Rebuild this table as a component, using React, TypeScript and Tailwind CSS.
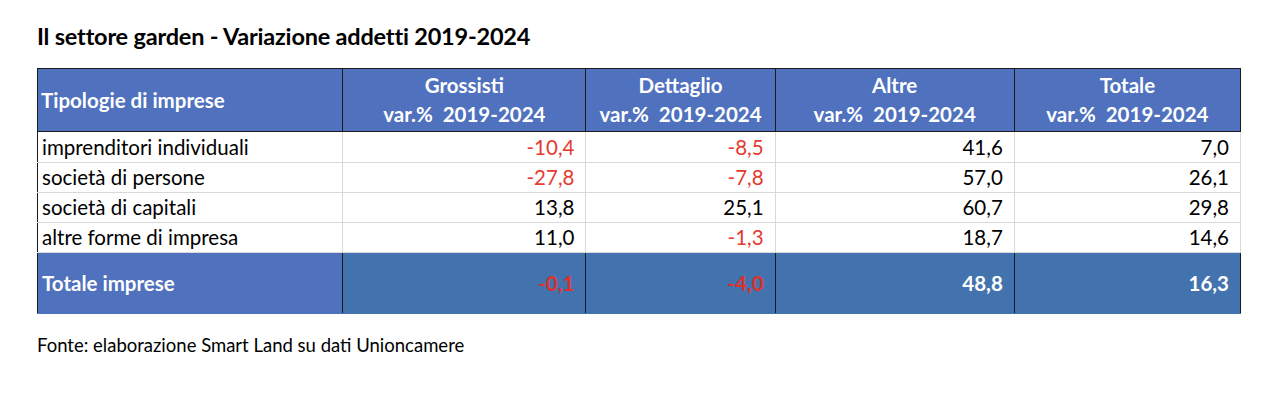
import React from "react";

type Row = {
  label: string;
  values: number[];
};

const rows: Row[] = [
  { label: "imprenditori individuali", values: [-10.4, -8.5, 41.6, 7.0] },
  { label: "società di persone", values: [-27.8, -7.8, 57.0, 26.1] },
  { label: "società di capitali", values: [13.8, 25.1, 60.7, 29.8] },
  { label: "altre forme di impresa", values: [11.0, -1.3, 18.7, 14.6] },
];

const total = [-0.1, -4.0, 48.8, 16.3];
const heads = ["Grossisti", "Dettaglio", "Altre", "Totale"];
const widths = ["w-[243px]", "w-[189px]", "w-[239px]", "w-[226px]"];
const rowHeights = ["h-[31px]", "h-[30px]", "h-[30px]", "h-[30px]"];

const fmt = (n: number) => n.toFixed(1).replace(".", ",");

export default function App() {
  return (
    <div className="h-[403px] w-[1280px] bg-white pl-[37px] pt-[22px] font-['Lato','Open_Sans',sans-serif] text-black">
      <h1 className="text-[23.5px] font-bold leading-7 tracking-[-0.2px]">
        Il settore garden - Variazione addetti 2019-2024
      </h1>

      <table className="mt-[18px] w-[1204px] table-fixed border-collapse text-[20.5px]">
        <colgroup>
          <col className="w-[305px]" />
          {widths.map((w, i) => (
            <col key={i} className={w} />
          ))}
        </colgroup>
        <thead>
          <tr className="h-[63px] bg-[#4f71be] text-[20.5px] text-white">
            <th className="border-[1.5px] border-[#1a1a1a] px-[3px] text-left font-bold">
              Tipologie di imprese
            </th>
            {heads.map((h) => (
              <th
                key={h}
                className="border-[1.5px] border-[#1a1a1a] text-center font-bold leading-[29px]"
              >
                <div>{h}</div>
                <div className="whitespace-pre">var.%  2019-2024</div>
              </th>
            ))}
          </tr>
        </thead>
        <tbody>
          {rows.map((r, ri) => (
            <tr key={r.label} className={rowHeights[ri]}>
              <td className="border-b border-r border-b-[#d9d9d9] border-r-[#d9d9d9] border-l-[1.5px] border-l-[#1a1a1a] px-[4px] leading-none">
                {r.label}
              </td>
              {r.values.map((v, i) => (
                <td
                  key={i}
                  className={`border border-[#d9d9d9] pr-[11px] text-right leading-none ${
                    v < 0 ? "text-[#e53a2f]" : "text-black"
                  }`}
                >
                  {fmt(v)}
                </td>
              ))}
            </tr>
          ))}
          <tr className="h-[61px] font-bold text-white">
            <td className="border-[1.5px] border-r-[#1a1a1a] border-y-[#4f71be] border-l-[#1a1a1a] bg-[#4f71be] px-[4px]">
              Totale imprese
            </td>
            {total.map((v, i) => (
              <td
                key={i}
                className={`border-[1.5px] border-x-[#1a1a1a] border-y-[#4373ae] bg-[#4373ae] pr-[11px] text-right ${
                  v < 0 ? "text-[#e0302a]" : "text-white"
                }`}
              >
                {fmt(v)}
              </td>
            ))}
          </tr>
        </tbody>
      </table>

      <p className="mt-[19px] text-[18.5px] leading-6">
        Fonte: elaborazione Smart Land su dati Unioncamere
      </p>
    </div>
  );
}
